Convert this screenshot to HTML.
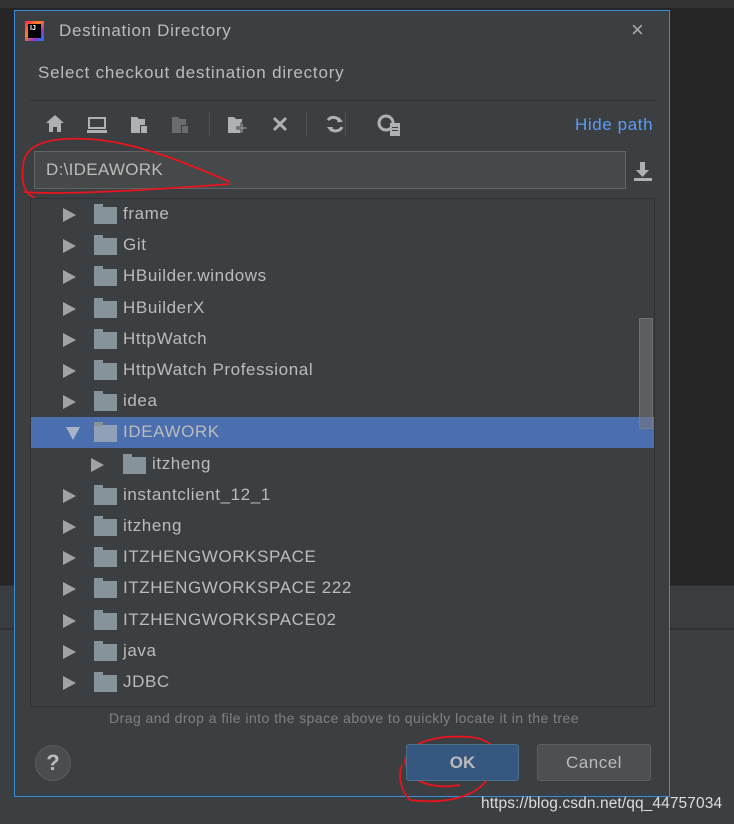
<!DOCTYPE html>
<html><head><meta charset="utf-8"><style>
*{margin:0;padding:0;box-sizing:border-box}
body{width:734px;height:824px;background:#3c3f41;position:relative;overflow:hidden;font-family:"Liberation Sans",sans-serif;color:#bbbbbb}
.a{position:absolute}
.row{position:absolute;left:31px;width:623px;height:31.2px}
.row .tri{position:absolute;top:9px;width:0;height:0;border-left:13px solid #a0a3a5;border-top:7px solid transparent;border-bottom:7px solid transparent}
.row .fd{position:absolute;top:8px;width:23px;height:17px;background:#87939a}
.row .fd:before{content:"";position:absolute;left:0;top:-3px;width:9px;height:4px;background:#87939a}
.row span{position:absolute;top:5px;font-size:17px;letter-spacing:0.6px;color:#bbbbbb;white-space:nowrap}
</style></head><body>
<div class="a" style="left:0;top:0;width:734px;height:585px;background:#262626"></div>
<div class="a" style="left:0;top:0;width:734px;height:8px;background:#333"></div>
<div class="a" style="left:0;top:585px;width:734px;height:43px;background:#3a3d40;border-top:1px solid #323232"></div>
<div class="a" style="left:0;top:628px;width:734px;height:196px;background:#3c3f41;border-top:2px solid #303030"></div>
<div class="a" style="left:14px;top:10px;width:656px;height:787px;background:#3c3f41;border:1px solid #3a8bd8"></div>
<!-- title -->
<div class="a" style="left:25px;top:21px;width:19px;height:20px;background:linear-gradient(135deg,#fe2857,#fc801d 40%,#9039d0 70%,#087cfa)"></div>
<div class="a" style="left:28px;top:24px;width:13px;height:14px;background:#000"></div>
<div class="a" style="left:30px;top:25px;font-size:7px;color:#fff;font-weight:bold">IJ</div>
<div class="a" style="left:59px;top:21px;font-size:17px;letter-spacing:0.7px;color:#bbbbbb">Destination Directory</div>
<div class="a" style="left:631px;top:17px;font-size:22px;color:#aaa">×</div>
<div class="a" style="left:38px;top:63px;font-size:17px;letter-spacing:0.8px;color:#bbbbbb">Select checkout destination directory</div>
<div class="a" style="left:30px;top:100px;width:625px;height:1px;background:#323232"></div>
<!-- toolbar -->
<svg class="a" style="left:40px;top:110px" width="400" height="30" viewBox="0 0 400 30">
<g fill="#aeb1b3">
<path d="M15 5 L6 13 L9 13 L9 22 L13 22 L13 17 L17 17 L17 22 L21 22 L21 13 L24 13 Z"/>
<rect x="48" y="7" width="18" height="12"/><rect x="50" y="9" width="14" height="8" fill="#3c3f41"/><rect x="47" y="20" width="20" height="3"/>
<path d="M91 7 h6 l2 2 h6 v6 h-5 v8 h-9 z"/><rect x="101" y="16" width="6" height="7"/>
<path d="M132 7 h6 l2 2 h6 v6 h-5 v8 h-9 z" fill="#6a6d70"/><rect x="142" y="16" width="6" height="7" fill="#6a6d70"/>
<path d="M188 7 h6 l2 2 h6 v14 h-14 z"/><path d="M201 13 h2 v4 h4 v2 h-4 v4 h-2 v-4 h-4 v-2 h4 z" stroke="#3c3f41" stroke-width="1"/>
<path d="M234 8 l12 12 M246 8 l-12 12" stroke="#aeb1b3" stroke-width="3"/>
<path d="M288 10 a7 7 0 0 1 12 2 M302 17 a7 7 0 0 1 -12 1" stroke="#aeb1b3" stroke-width="3" fill="none"/>
<path d="M299 7 l4 5 -6 0z M291 22 l-4 -5 6 0z"/>
<circle cx="346" cy="13" r="7" fill="none" stroke="#aeb1b3" stroke-width="3"/><rect x="350" y="13" width="10" height="13"/><rect x="352" y="17" width="6" height="1" fill="#3c3f41"/><rect x="352" y="20" width="6" height="1" fill="#3c3f41"/>
</g>
<rect x="169" y="2" width="1" height="24" fill="#4e5254"/><rect x="266" y="2" width="1" height="24" fill="#4e5254"/><rect x="305" y="2" width="1" height="24" fill="#4e5254"/>
</svg>
<div class="a" style="left:575px;top:115px;font-size:17px;letter-spacing:0.6px;color:#589df6">Hide path</div>
<!-- path field -->
<div class="a" style="left:34px;top:151px;width:592px;height:38px;background:#45494a;border:1px solid #646464"></div>
<div class="a" style="left:46px;top:160px;font-size:17px;letter-spacing:0.3px;color:#bbbbbb">D:\IDEAWORK</div>
<svg class="a" style="left:632px;top:160px" width="22" height="22"><path d="M8 2 h5 v8 h4 l-6.5 7 l-6.5 -7 h4 z" fill="#aeb1b3"/><rect x="2" y="18" width="18" height="3" fill="#aeb1b3"/></svg>
<!-- red annotation -->
<svg class="a" style="left:0;top:0" width="734" height="824">
<path d="M230 182 C180 160 140 145 100 140 C60 136 30 140 24 160 C20 180 24 195 36 198 M24 192 C60 195 150 190 230 184" stroke="#e8141e" stroke-width="1.8" fill="none"/>
<path d="M62 445 C120 442 180 442 240 440" stroke="#e8141e" stroke-width="1.8" fill="none"/>
<path d="M460 785 C430 790 405 780 405 760 C410 740 440 735 470 737 C500 740 500 760 490 775 C480 795 450 805 410 800 C400 790 398 775 402 765" stroke="#e8141e" stroke-width="1.8" fill="none"/>
</svg>
<!-- tree -->
<div class="a" style="left:30px;top:198px;width:625px;height:509px;border:1px solid #2f3133;background:#3c3f41"></div>
<div class="a" style="left:31px;top:417px;width:623px;height:31px;background:#4b6eaf"></div>
<div class="a" style="left:639px;top:318px;width:14px;height:111px;background:rgba(120,120,120,0.55);border:1px solid rgba(140,140,140,0.4)"></div>
<div class="row" style="top:199px"><div class="tri" style="left:32px"></div><div class="fd" style="left:63px"></div><span style="left:92px">frame</span></div>
<div class="row" style="top:230.2px"><div class="tri" style="left:32px"></div><div class="fd" style="left:63px"></div><span style="left:92px">Git</span></div>
<div class="row" style="top:261.4px"><div class="tri" style="left:32px"></div><div class="fd" style="left:63px"></div><span style="left:92px">HBuilder.windows</span></div>
<div class="row" style="top:292.6px"><div class="tri" style="left:32px"></div><div class="fd" style="left:63px"></div><span style="left:92px">HBuilderX</span></div>
<div class="row" style="top:323.8px"><div class="tri" style="left:32px"></div><div class="fd" style="left:63px"></div><span style="left:92px">HttpWatch</span></div>
<div class="row" style="top:355px"><div class="tri" style="left:32px"></div><div class="fd" style="left:63px"></div><span style="left:92px">HttpWatch Professional</span></div>
<div class="row" style="top:386.2px"><div class="tri" style="left:32px"></div><div class="fd" style="left:63px"></div><span style="left:92px">idea</span></div>
<div class="row" style="top:417.4px"><div class="a" style="left:35px;top:10px;border-top:13px solid #a9b3c8;border-left:7px solid transparent;border-right:7px solid transparent"></div><div class="fd" style="left:63px;background:#90a0b8"></div><span style="left:92px">IDEAWORK</span></div>
<div class="row" style="top:448.6px"><div class="tri" style="left:60px"></div><div class="fd" style="left:92px"></div><span style="left:121px">itzheng</span></div>
<div class="row" style="top:479.8px"><div class="tri" style="left:32px"></div><div class="fd" style="left:63px"></div><span style="left:92px">instantclient_12_1</span></div>
<div class="row" style="top:511px"><div class="tri" style="left:32px"></div><div class="fd" style="left:63px"></div><span style="left:92px">itzheng</span></div>
<div class="row" style="top:542.2px"><div class="tri" style="left:32px"></div><div class="fd" style="left:63px"></div><span style="left:92px">ITZHENGWORKSPACE</span></div>
<div class="row" style="top:573.4px"><div class="tri" style="left:32px"></div><div class="fd" style="left:63px"></div><span style="left:92px">ITZHENGWORKSPACE 222</span></div>
<div class="row" style="top:604.6px"><div class="tri" style="left:32px"></div><div class="fd" style="left:63px"></div><span style="left:92px">ITZHENGWORKSPACE02</span></div>
<div class="row" style="top:635.8px"><div class="tri" style="left:32px"></div><div class="fd" style="left:63px"></div><span style="left:92px">java</span></div>
<div class="row" style="top:667px"><div class="tri" style="left:32px"></div><div class="fd" style="left:63px"></div><span style="left:92px">JDBC</span></div>
<div class="a" style="left:103px;top:710px;width:482px;text-align:center;font-size:14px;letter-spacing:0.45px;color:#808080;white-space:nowrap">Drag and drop a file into the space above to quickly locate it in the tree</div>
<!-- buttons -->
<div class="a" style="left:35px;top:745px;width:36px;height:36px;border-radius:50%;background:#4a4d50;border:1px solid #5a5d60;color:#bbb;font-size:22px;font-weight:bold;text-align:center;line-height:33px">?</div>
<div class="a" style="left:406px;top:744px;width:113px;height:37px;background:#365880;border:1px solid #4c708c;border-radius:3px;color:#bbbbbb;font-size:17px;font-weight:bold;text-align:center;line-height:35px">OK</div>
<div class="a" style="left:537px;top:744px;width:114px;height:37px;background:#4c5052;border:1px solid #5e6060;border-radius:3px;color:#bbbbbb;font-size:17px;letter-spacing:0.5px;text-align:center;line-height:35px">Cancel</div>
<div class="a" style="left:481px;top:795px;font-size:15.5px;letter-spacing:0.1px;color:#ddd">https://blog.csdn.net/qq_44757034</div>
</body></html>
